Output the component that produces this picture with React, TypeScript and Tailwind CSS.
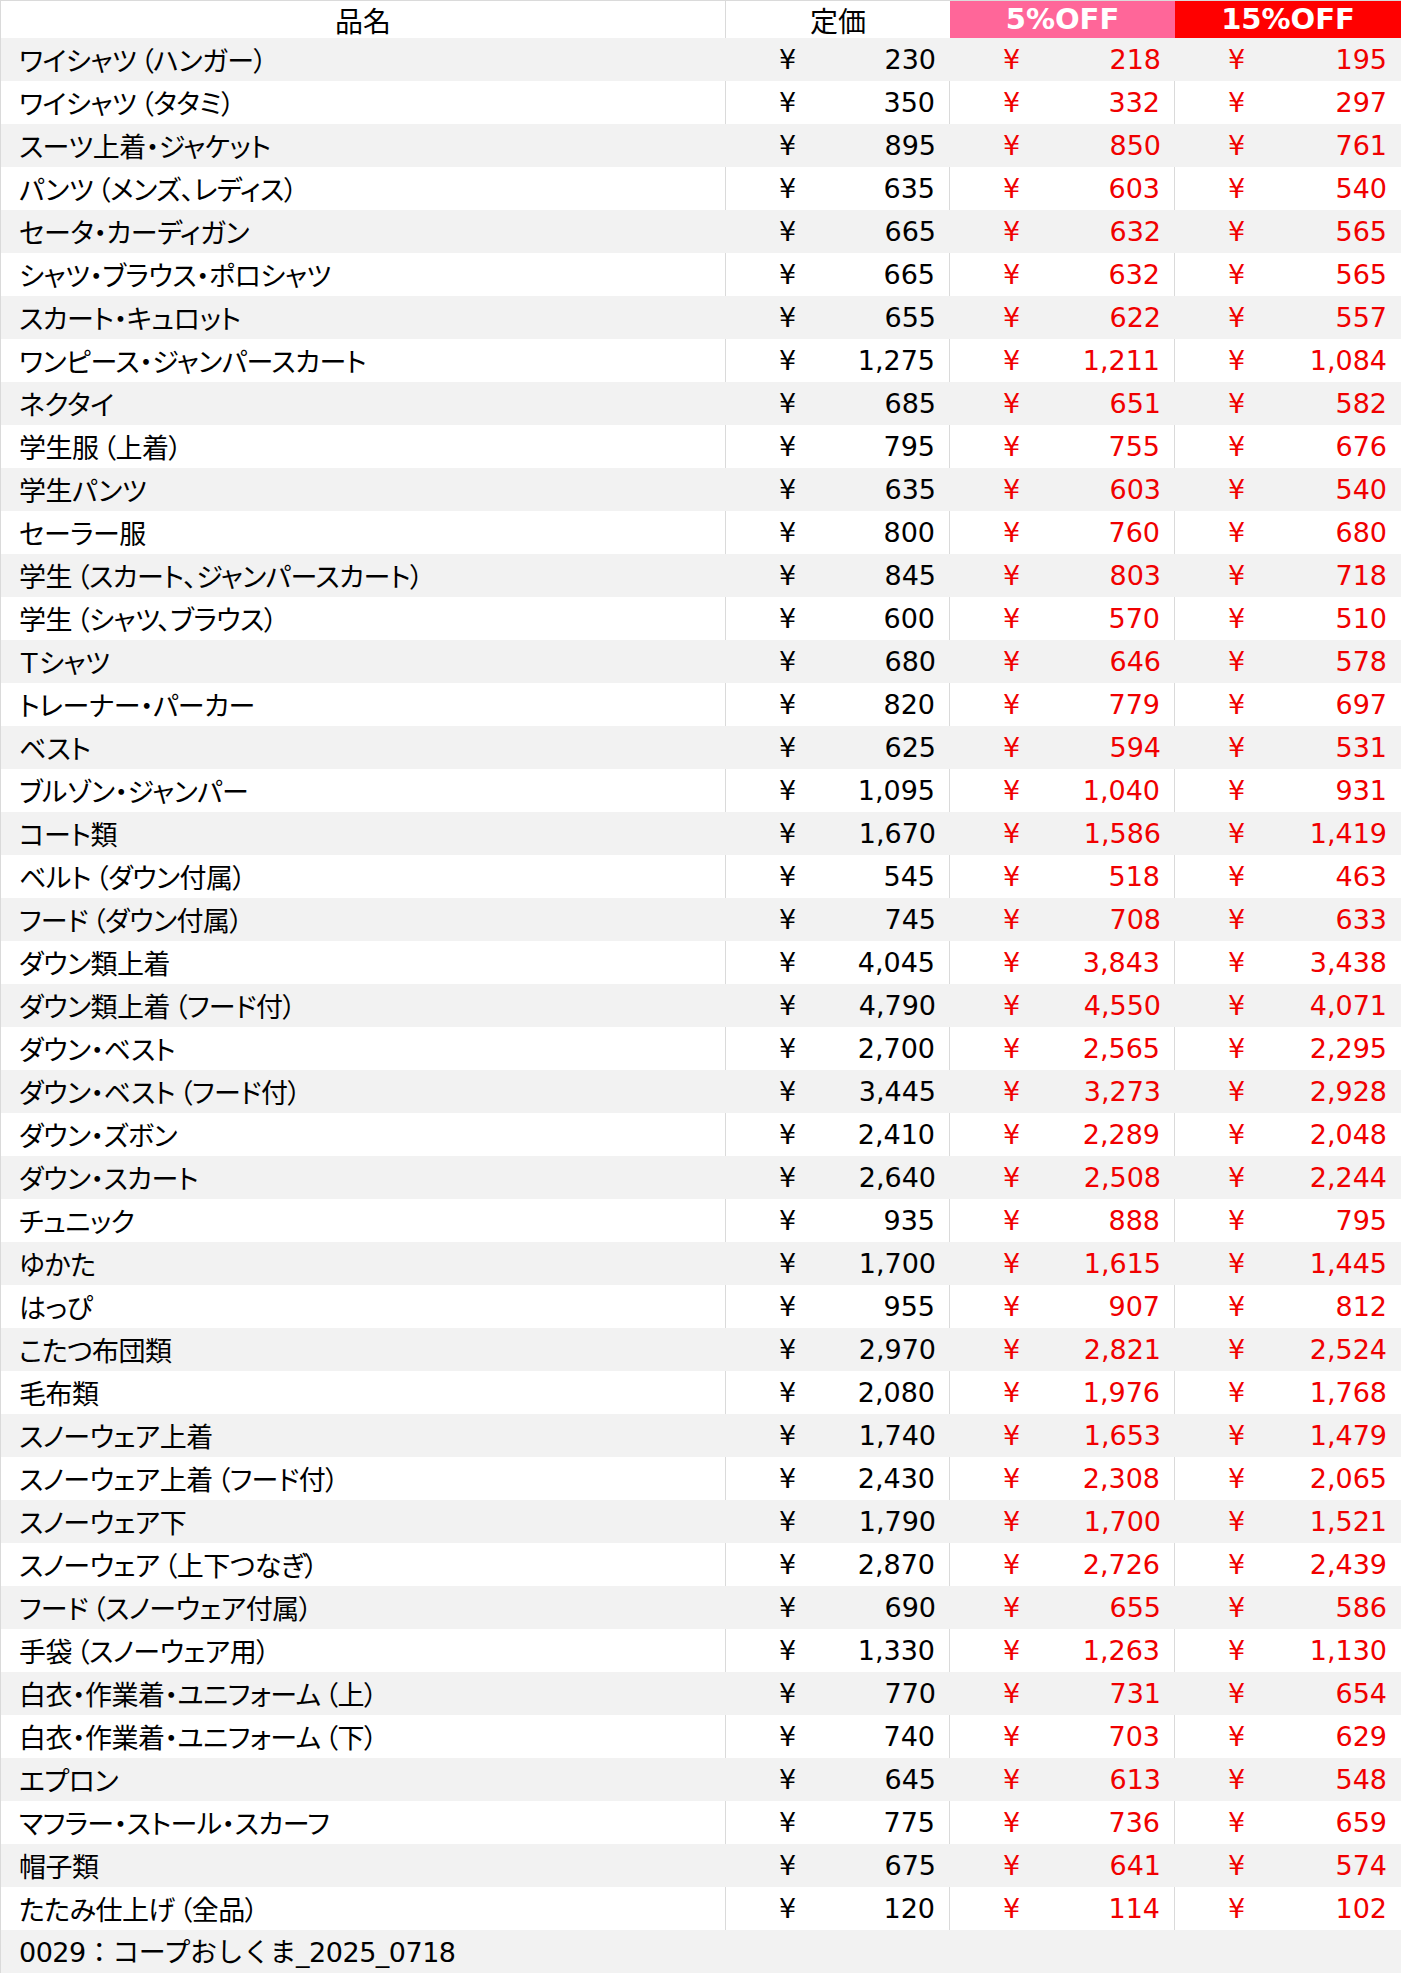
type Item = {
  name: string;
  price: number;
};

const items: Item[] = [
  { name: "ワイシャツ（ハンガー）", price: 230 },
  { name: "ワイシャツ（タタミ）", price: 350 },
  { name: "スーツ上着・ジャケット", price: 895 },
  { name: "パンツ（メンズ、レディス）", price: 635 },
  { name: "セータ・カーディガン", price: 665 },
  { name: "シャツ・ブラウス・ポロシャツ", price: 665 },
  { name: "スカート・キュロット", price: 655 },
  { name: "ワンピース・ジャンパースカート", price: 1275 },
  { name: "ネクタイ", price: 685 },
  { name: "学生服（上着）", price: 795 },
  { name: "学生パンツ", price: 635 },
  { name: "セーラー服", price: 800 },
  { name: "学生（スカート、ジャンパースカート）", price: 845 },
  { name: "学生（シャツ、ブラウス）", price: 600 },
  { name: "Ｔシャツ", price: 680 },
  { name: "トレーナー・パーカー", price: 820 },
  { name: "ベスト", price: 625 },
  { name: "ブルゾン・ジャンパー", price: 1095 },
  { name: "コート類", price: 1670 },
  { name: "ベルト（ダウン付属）", price: 545 },
  { name: "フード（ダウン付属）", price: 745 },
  { name: "ダウン類上着", price: 4045 },
  { name: "ダウン類上着（フード付）", price: 4790 },
  { name: "ダウン・ベスト", price: 2700 },
  { name: "ダウン・ベスト（フード付）", price: 3445 },
  { name: "ダウン・ズボン", price: 2410 },
  { name: "ダウン・スカート", price: 2640 },
  { name: "チュニック", price: 935 },
  { name: "ゆかた", price: 1700 },
  { name: "はっぴ", price: 955 },
  { name: "こたつ布団類", price: 2970 },
  { name: "毛布類", price: 2080 },
  { name: "スノーウェア上着", price: 1740 },
  { name: "スノーウェア上着（フード付）", price: 2430 },
  { name: "スノーウェア下", price: 1790 },
  { name: "スノーウェア（上下つなぎ）", price: 2870 },
  { name: "フード（スノーウェア付属）", price: 690 },
  { name: "手袋（スノーウェア用）", price: 1330 },
  { name: "白衣・作業着・ユニフォーム（上）", price: 770 },
  { name: "白衣・作業着・ユニフォーム（下）", price: 740 },
  { name: "エプロン", price: 645 },
  { name: "マフラー・ストール・スカーフ", price: 775 },
  { name: "帽子類", price: 675 },
  { name: "たたみ仕上げ（全品）", price: 120 },
];

// the sheet rounds .5 down (230 * 0.95 -> 218)
function discount(price: number, percent: number): number {
  return Math.ceil((price * (100 - percent)) / 100 - 0.5);
}

function yen(value: number): string {
  return value.toLocaleString("en-US");
}

// parens get a bit of air, like the sheet's font
function Name({ text }: { text: string }) {
  const parts = text.split(/([（）])/).filter(Boolean);
  return (
    <>
      {parts.map((part, i) =>
        part === "（" ? (
          <span key={i} className="pl-[4px]">
            {part}
          </span>
        ) : part === "）" ? (
          <span key={i} className="pr-[4px]">
            {part}
          </span>
        ) : (
          <span key={i}>{part}</span>
        ),
      )}
    </>
  );
}

function Money({ value, red, line }: { value: number; red?: boolean; line?: boolean }) {
  return (
    <div
      className={`flex items-center justify-between pl-[53px] pr-[14px] font-['DejaVu_Sans','Noto_Sans_CJK_JP',sans-serif] text-[27px] ${
        line ? "border-r border-[#dadada]" : ""
      } ${red ? "text-[#f00000]" : "text-black"}`}
    >
      <span>¥</span>
      <span>{yen(value)}</span>
    </div>
  );
}

export default function App() {
  return (
    <main className="w-[1401px] bg-white font-['Noto_Sans_CJK_JP','Noto_Sans',sans-serif] text-[27px] leading-none text-black">
      <div className="border-l border-t border-[#dadada]">
        <div className="grid h-[37px] grid-cols-[725px_224px_225px_226px]">
          <div className="flex items-center justify-center border-r border-[#dadada] bg-white text-[28px]">品名</div>
          <div className="flex items-center justify-center bg-white text-[28px]">定価</div>
          <div className="flex items-center justify-center bg-[#ff6699] font-['DejaVu_Sans',sans-serif] text-[29px] font-bold text-white">
            5%OFF
          </div>
          <div className="flex items-center justify-center bg-[#ff0000] font-['DejaVu_Sans',sans-serif] text-[29px] font-bold text-white">
            15%OFF
          </div>
        </div>

        {items.map((item, i) => {
          const white = i % 2 === 1;
          return (
            <div
              key={item.name}
              className={`grid h-[43px] grid-cols-[725px_224px_225px_226px] ${white ? "bg-white" : "bg-[#f2f2f2]"}`}
            >
              <div
                className={`flex items-center pl-[18px] tracking-[-0.5px] [font-feature-settings:'palt'] ${
                  white ? "border-r border-[#dadada]" : ""
                }`}
              >
                <Name text={item.name} />
              </div>
              <Money value={item.price} line={white} />
              <Money value={discount(item.price, 5)} red line={white} />
              <Money value={discount(item.price, 15)} red />
            </div>
          );
        })}

        <div className="flex h-[44px] items-center bg-[#f2f2f2] pl-[18px] font-['DejaVu_Sans','Noto_Sans_CJK_JP',sans-serif] tracking-[-0.5px]">
          0029：コープおしくま_2025_0718
        </div>
      </div>
    </main>
  );
}
